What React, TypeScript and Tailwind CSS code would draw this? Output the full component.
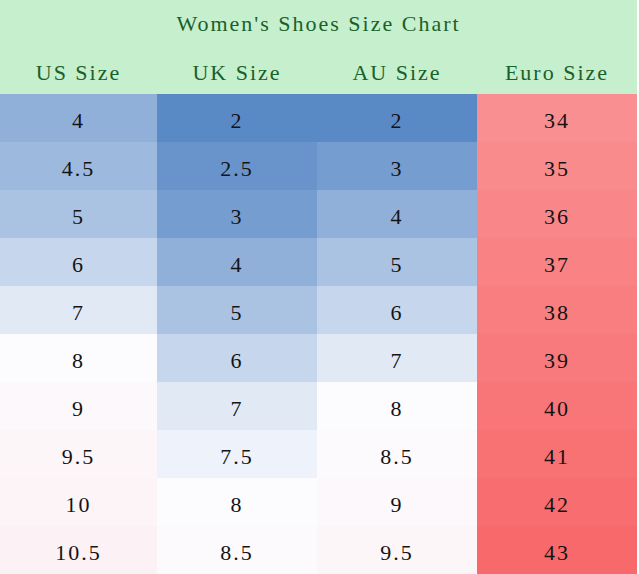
const serif = "font-['Liberation_Serif','Noto_Sans_CJK_SC',serif]";

type Cell = { v: string; bg: string };

// colours follow the sheet's 3-colour scale (blue #5A8AC6 → white #FCFCFF → red #F8696B), midpoint 8
const rows: Cell[][] = [
  [
    { v: '4', bg: 'bg-[#90B0D9]' },
    { v: '2', bg: 'bg-[#5A8AC6]' },
    { v: '2', bg: 'bg-[#5A8AC6]' },
    { v: '34', bg: 'bg-[#F98F91]' },
  ],
  [
    { v: '4.5', bg: 'bg-[#9DB9DE]' },
    { v: '2.5', bg: 'bg-[#6894CB]' },
    { v: '3', bg: 'bg-[#759DCF]' },
    { v: '35', bg: 'bg-[#F98B8D]' },
  ],
  [
    { v: '5', bg: 'bg-[#ABC3E2]' },
    { v: '3', bg: 'bg-[#759DCF]' },
    { v: '4', bg: 'bg-[#90B0D9]' },
    { v: '36', bg: 'bg-[#F98689]' },
  ],
  [
    { v: '6', bg: 'bg-[#C6D6EC]' },
    { v: '4', bg: 'bg-[#90B0D9]' },
    { v: '5', bg: 'bg-[#ABC3E2]' },
    { v: '37', bg: 'bg-[#F98284]' },
  ],
  [
    { v: '7', bg: 'bg-[#E1E9F5]' },
    { v: '5', bg: 'bg-[#ABC3E2]' },
    { v: '6', bg: 'bg-[#C6D6EC]' },
    { v: '38', bg: 'bg-[#F97E80]' },
  ],
  [
    { v: '8', bg: 'bg-[#FCFCFF]' },
    { v: '6', bg: 'bg-[#C6D6EC]' },
    { v: '7', bg: 'bg-[#E1E9F5]' },
    { v: '39', bg: 'bg-[#F87A7C]' },
  ],
  [
    { v: '9', bg: 'bg-[#FCF8FB]' },
    { v: '7', bg: 'bg-[#E1E9F5]' },
    { v: '8', bg: 'bg-[#FCFCFF]' },
    { v: '40', bg: 'bg-[#F87678]' },
  ],
  [
    { v: '9.5', bg: 'bg-[#FCF6F9]' },
    { v: '7.5', bg: 'bg-[#EEF2FA]' },
    { v: '8.5', bg: 'bg-[#FCFAFD]' },
    { v: '41', bg: 'bg-[#F87173]' },
  ],
  [
    { v: '10', bg: 'bg-[#FCF4F6]' },
    { v: '8', bg: 'bg-[#FCFCFF]' },
    { v: '9', bg: 'bg-[#FCF8FB]' },
    { v: '42', bg: 'bg-[#F86D6F]' },
  ],
  [
    { v: '10.5', bg: 'bg-[#FCF1F4]' },
    { v: '8.5', bg: 'bg-[#FCFAFD]' },
    { v: '9.5', bg: 'bg-[#FCF6F9]' },
    { v: '43', bg: 'bg-[#F8696B]' },
  ],
];

const headers = ['US Size', 'UK Size', 'AU Size', 'Euro Size'];

const App = () => {
  return (
    <div className={`w-[639px] h-[574px] overflow-hidden bg-white ${serif}`}>
      <div className="w-[637px] grid grid-cols-[157px_160px_160px_160px] text-[22px]">
        {/* Title */}
        <div className="col-span-4 h-[47px] bg-[#C6EFCE] text-[#19612a] tracking-[2px] flex items-center justify-center">
          Women's Shoes Size Chart
        </div>

        {/* Column headers */}
        {headers.map((h) => (
          <div
            key={h}
            className="h-[47px] pt-[3px] bg-[#C6EFCE] text-[#19612a] tracking-[2px] flex items-center justify-center"
          >
            {h}
          </div>
        ))}

        {/* Data rows */}
        {rows.map((row, i) =>
          row.map((c, j) => (
            <div
              key={`${i}-${j}`}
              className={`h-[48px] pt-[4px] flex items-center justify-center tracking-[2px] text-[#141414] ${c.bg}`}
            >
              {c.v}
            </div>
          )),
        )}
      </div>
    </div>
  );
};

export default App;
